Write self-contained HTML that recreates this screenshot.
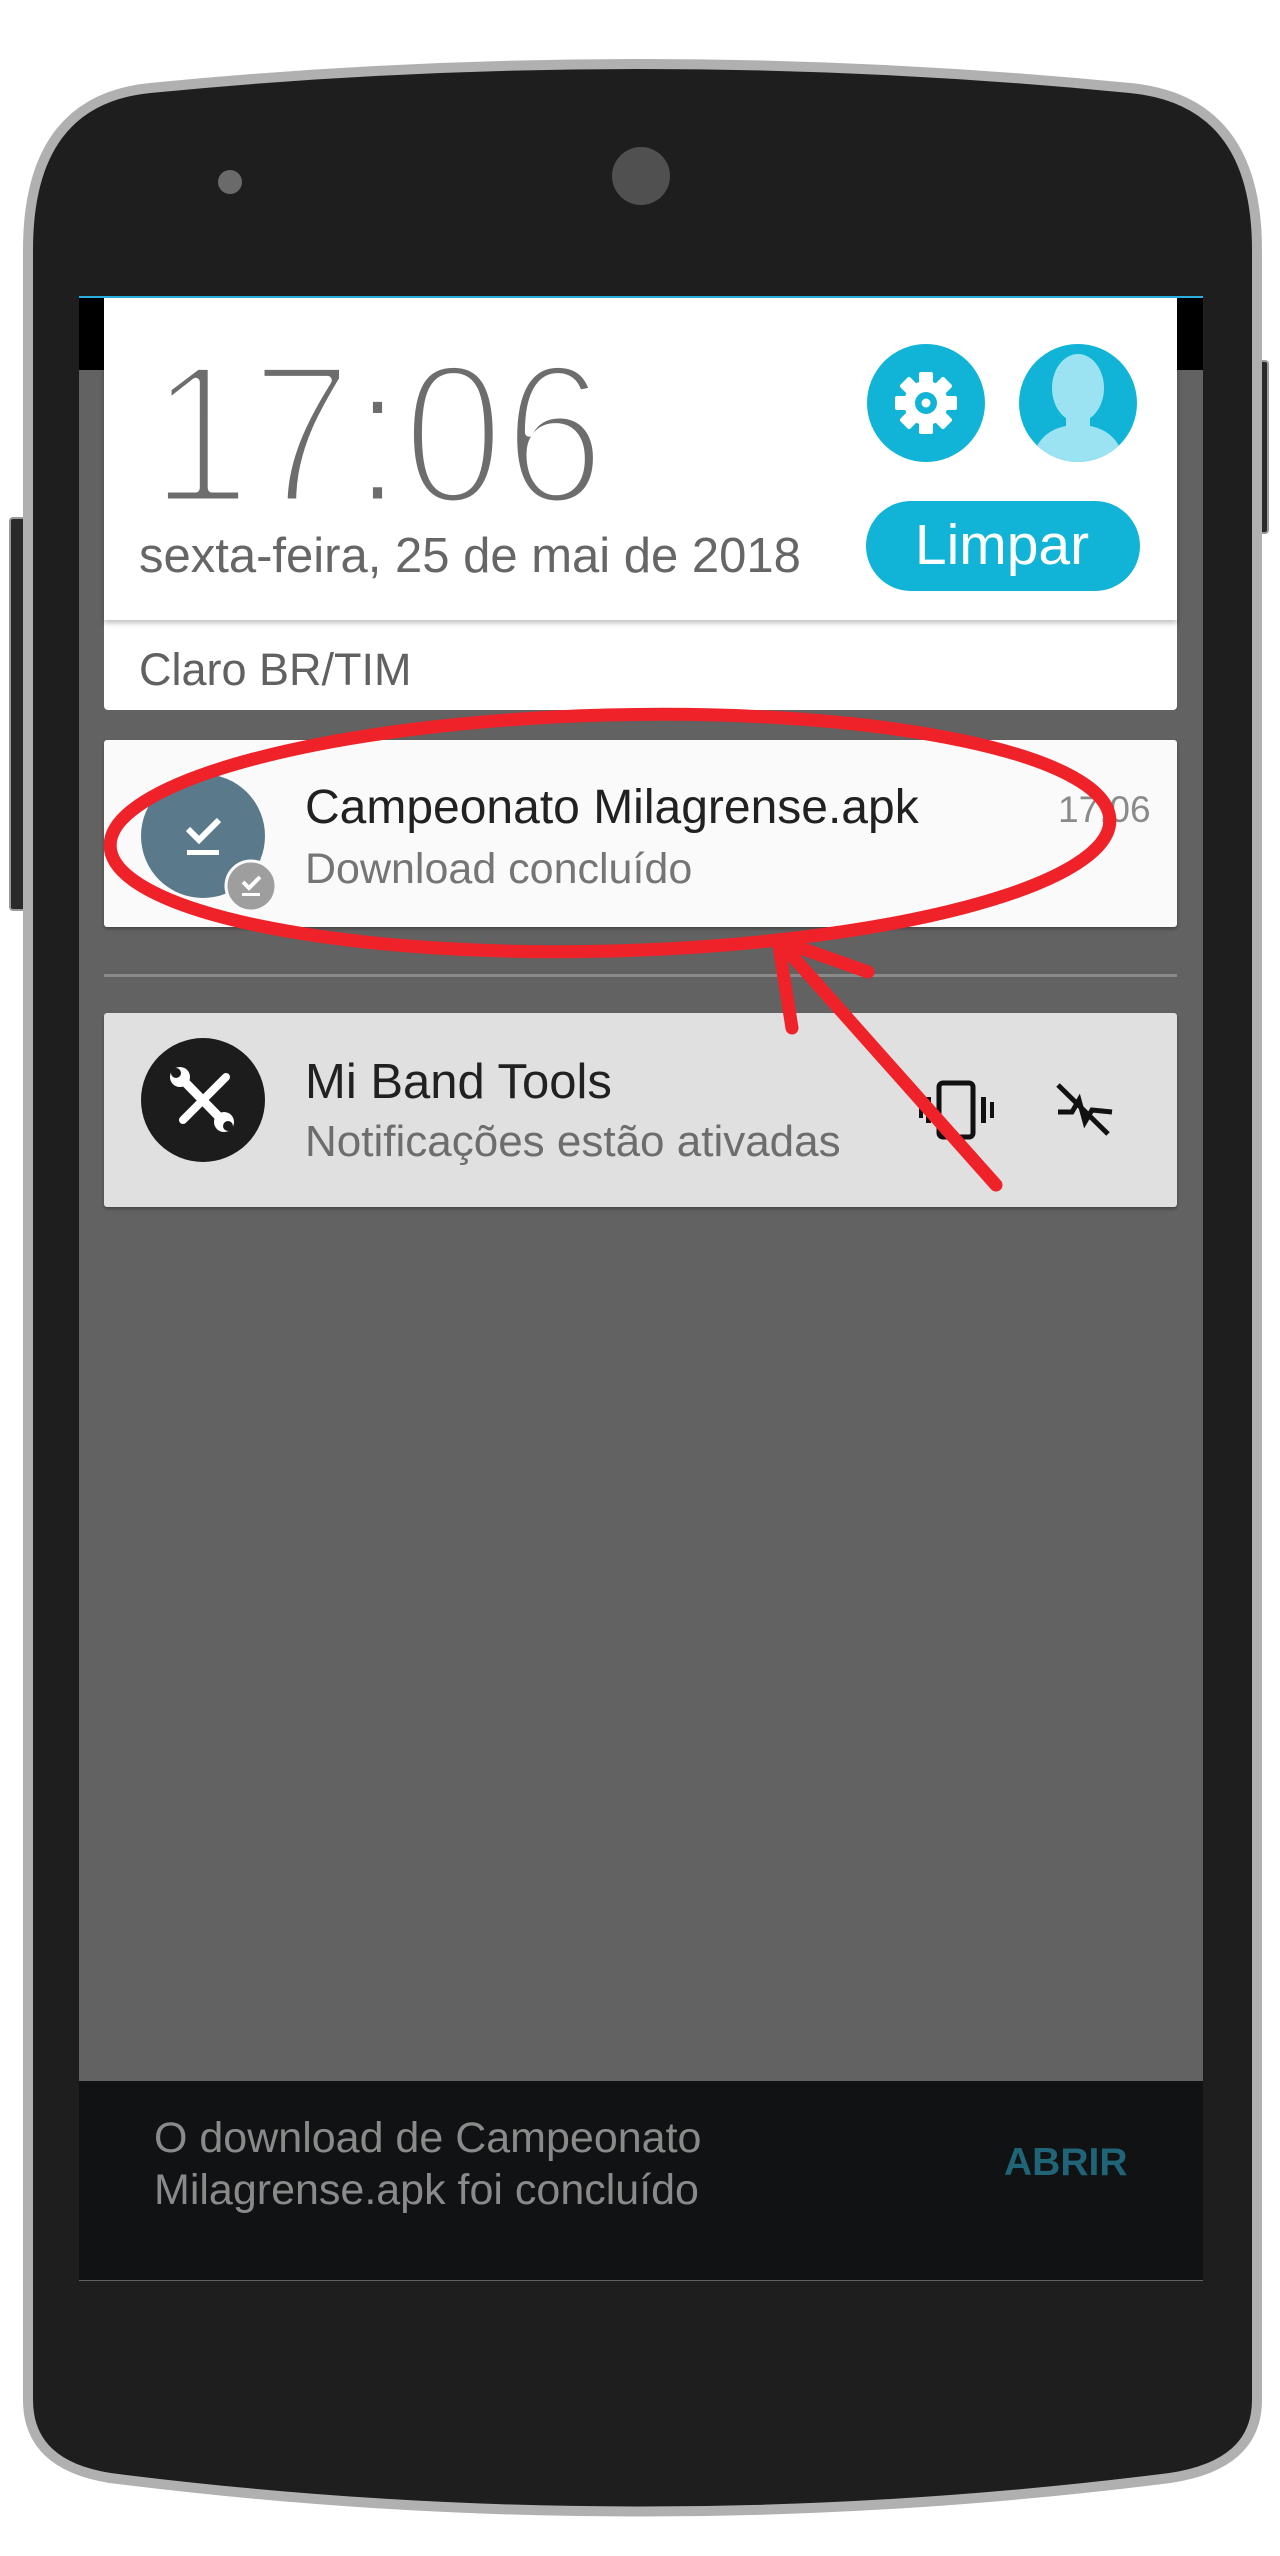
<!DOCTYPE html>
<html><head><meta charset="utf-8">
<style>
html,body{margin:0;padding:0;background:#fff;}
body{width:1280px;height:2556px;position:relative;overflow:hidden;font-family:"Liberation Sans",sans-serif;}
.abs{position:absolute;white-space:nowrap;}
</style></head>
<body>
<svg class="abs" style="left:0;top:0" width="1280" height="2556" viewBox="0 0 1280 2556">
  <rect x="1254" y="361" width="14" height="172" rx="3" fill="#2a2a2a" stroke="#999" stroke-width="2"/>
  <rect x="10" y="518" width="16" height="392" rx="3" fill="#2a2a2a" stroke="#999" stroke-width="2"/>
  <path d="M28,250 Q28,100 150,88 Q640,40 1130,88 Q1257,100 1257,250 L1257,2400 Q1257,2465 1170,2478 Q640,2545 110,2478 Q28,2465 28,2400 Z" fill="#1e1e1e" stroke="#b0b0b0" stroke-width="10"/>
  <circle cx="230" cy="182" r="12" fill="#6a6a6a"/>
  <circle cx="641" cy="176" r="29" fill="#505050"/>
  <rect x="79" y="298" width="1124" height="1983" fill="#626262"/>
  <rect x="79" y="298" width="1124" height="72" fill="#000"/>
  <rect x="79" y="296" width="1124" height="2" fill="#2ab0e0"/>
  <rect x="79" y="2081" width="1124" height="199" fill="#111213"/>
</svg>

<div class="abs" style="left:104px;top:298px;width:1073px;height:322px;background:#fff;box-shadow:0 3px 5px rgba(0,0,0,.25);z-index:2"></div>
<div class="abs" style="left:104px;top:620px;width:1073px;height:90px;background:#fff;border-radius:0 0 4px 4px;"></div>
<div class="abs" style="left:139px;top:644px;font-size:45px;color:#616161;z-index:3">Claro BR/TIM</div>

<svg class="abs" style="left:0;top:0;z-index:4" width="1280" height="720" viewBox="0 0 1280 720">
  <text x="150" y="503" font-family="Liberation Sans, sans-serif" font-size="200" fill="#6d6d6d" stroke="#fff" stroke-width="9" stroke-linejoin="round" textLength="455" lengthAdjust="spacingAndGlyphs">17:06</text>
  <text x="139" y="572" font-family="Liberation Sans, sans-serif" font-size="49" fill="#666">sexta-feira, 25 de mai de 2018</text>
  <circle cx="926" cy="403" r="59" fill="#11b3d6"/>
  <g transform="translate(926,403)" fill="#fff">
    <circle r="22"/>
    <rect x="-7" y="-31" width="14" height="62" rx="2"/>
    <rect x="-7" y="-31" width="14" height="62" rx="2" transform="rotate(45)"/>
    <rect x="-7" y="-31" width="14" height="62" rx="2" transform="rotate(90)"/>
    <rect x="-7" y="-31" width="14" height="62" rx="2" transform="rotate(135)"/>
    <circle r="11" fill="#11b3d6"/>
    <circle r="4.5" fill="#fff"/>
  </g>
  <clipPath id="av"><circle cx="1078" cy="403" r="59"/></clipPath>
  <circle cx="1078" cy="403" r="59" fill="#11b3d6"/>
  <g clip-path="url(#av)" fill="#9be3f3">
    <ellipse cx="1078" cy="388" rx="26" ry="34"/>
    <rect x="1066" y="410" width="24" height="22"/>
    <path d="M1030,470 Q1034,432 1066,426 L1090,426 Q1122,432 1126,470 Z"/>
  </g>
  <rect x="866" y="501" width="274" height="90" rx="45" fill="#11b3d6"/>
  <text x="1002" y="564" text-anchor="middle" font-family="Liberation Sans, sans-serif" font-size="57" fill="#fff">Limpar</text>
</svg>

<div class="abs" style="left:104px;top:740px;width:1073px;height:187px;background:#fafafa;border-radius:3px;box-shadow:0 2px 3px rgba(0,0,0,.3)"></div>
<div class="abs" style="left:305px;top:780px;font-size:48px;color:#212121">Campeonato Milagrense.apk</div>
<div class="abs" style="left:305px;top:845px;font-size:43px;color:#757575">Download concluído</div>
<div class="abs" style="left:1058px;top:789px;font-size:37px;color:#8a8a8a">17:06</div>

<div class="abs" style="left:104px;top:974px;width:1073px;height:3px;background:#8a8a8a"></div>

<div class="abs" style="left:104px;top:1013px;width:1073px;height:194px;background:#e0e0e0;border-radius:3px;box-shadow:0 2px 3px rgba(0,0,0,.3)"></div>
<div class="abs" style="left:305px;top:1054px;font-size:49px;color:#212121">Mi Band Tools</div>
<div class="abs" style="left:305px;top:1117px;font-size:44px;color:#6d6d6d">Notificações estão ativadas</div>

<svg class="abs" style="left:0;top:0;z-index:5" width="1280" height="1300" viewBox="0 0 1280 1300">
  <circle cx="203" cy="836" r="62" fill="#5a7a8c"/>
  <path d="M188,829 L199,840 L219,820" stroke="#fff" stroke-width="6" fill="none"/>
  <rect x="187" y="850" width="32" height="5" fill="#fff"/>
  <circle cx="251" cy="886" r="25" fill="#9e9e9e" stroke="#fafafa" stroke-width="3"/>
  <path d="M243,882 L249,888 L260,877" stroke="#fff" stroke-width="4" fill="none"/>
  <rect x="242" y="893" width="18" height="3" fill="#fff"/>
  <circle cx="203" cy="1100" r="62" fill="#1c1c1c"/>
  <g stroke="#fff" stroke-linecap="round" fill="none">
    <line x1="180" y1="1077" x2="224" y2="1122" stroke-width="9"/>
    <line x1="226" y1="1077" x2="183" y2="1120" stroke-width="8"/>
  </g>
  <circle cx="180" cy="1077" r="10" fill="#fff"/>
  <circle cx="176" cy="1073" r="5" fill="#1c1c1c"/>
  <circle cx="224" cy="1122" r="10" fill="#fff"/>
  <circle cx="228" cy="1126" r="5" fill="#1c1c1c"/>
  <rect x="939" y="1083" width="34" height="54" rx="4" fill="none" stroke="#111" stroke-width="5"/>
  <rect x="926" y="1097" width="5" height="26" fill="#111"/>
  <rect x="981" y="1097" width="5" height="26" fill="#111"/>
  <rect x="919" y="1102" width="4" height="16" fill="#111"/>
  <rect x="990" y="1102" width="4" height="16" fill="#111"/>
  <g stroke="#111" stroke-width="5" fill="none">
    <line x1="1058" y1="1085" x2="1108" y2="1134"/>
    <path d="M1058,1112 L1072,1112 L1079,1100 L1085,1122 L1092,1110 L1112,1112"/>
  </g>
  <ellipse cx="610" cy="833" rx="500" ry="118" transform="rotate(-1.5 610 833)" fill="none" stroke="#ee2228" stroke-width="13"/>
  <g stroke="#ee2228" stroke-width="13" stroke-linecap="round" fill="none">
    <line x1="996" y1="1185" x2="778" y2="940"/>
    <line x1="778" y1="940" x2="792" y2="1028"/>
    <line x1="778" y1="940" x2="868" y2="972"/>
  </g>
</svg>

<div class="abs" style="left:154px;top:2112px;font-size:43px;line-height:52px;color:#8a8a8a;z-index:6">O download de Campeonato<br>Milagrense.apk foi concluído</div>
<div class="abs" style="left:1004px;top:2141px;font-size:39px;font-weight:bold;color:#1f6577;z-index:6">ABRIR</div>
</body></html>
